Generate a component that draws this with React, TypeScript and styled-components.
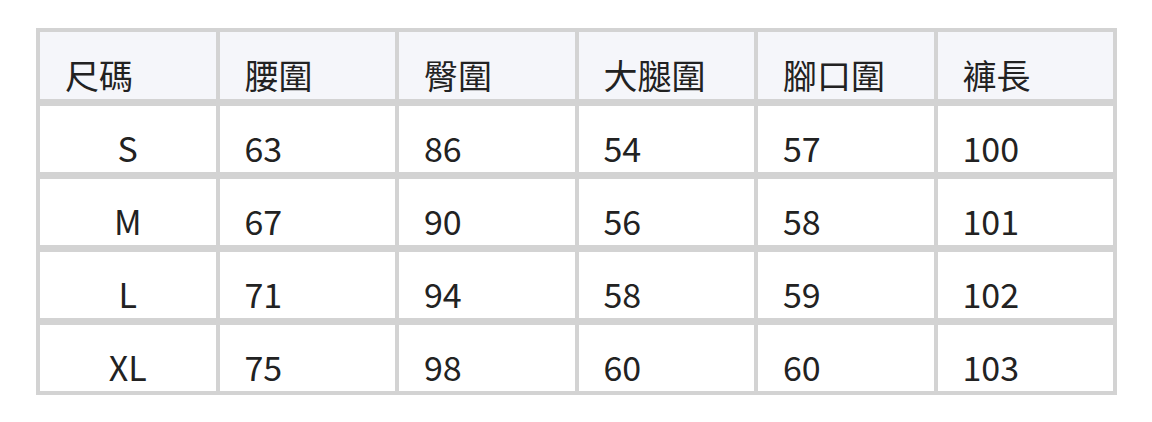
import React from 'react';
import styled, { createGlobalStyle } from 'styled-components';

const GlobalStyle = createGlobalStyle`
  body {
    margin: 0;
    background: #ffffff;
    font-family: 'Noto Sans CJK TC', 'Noto Sans', sans-serif;
  }
`;

const Page = styled.div`
  padding: 28px 36px;
`;

const SizeTable = styled.div`
  width: 1081px;
  box-sizing: border-box;
  padding: 4px;
  background: #d3d3d3;
  display: grid;
  grid-template-columns: repeat(6, 1fr);
  grid-template-rows: 67px repeat(4, 66px);
  column-gap: 4px;
  row-gap: 7px;
`;

const Cell = styled.div<{ $head?: boolean; $center?: boolean }>`
  display: flex;
  align-items: center;
  justify-content: ${(p) => (p.$center ? 'center' : 'flex-start')};
  box-sizing: border-box;
  padding: 18px 0 0 ${(p) => (p.$center ? '0' : '25px')};
  background: ${(p) => (p.$head ? '#f5f6fa' : '#ffffff')};
  color: #222222;
  font-size: 34px;
  line-height: 1;
`;

const headers = ['尺碼', '腰圍', '臀圍', '大腿圍', '腳口圍', '褲長'];

const rows = [
  ['S', '63', '86', '54', '57', '100'],
  ['M', '67', '90', '56', '58', '101'],
  ['L', '71', '94', '58', '59', '102'],
  ['XL', '75', '98', '60', '60', '103'],
];

export default function App() {
  return (
    <>
      <GlobalStyle />
      <Page>
        <SizeTable>
          {headers.map((h) => (
            <Cell key={h} $head>
              {h}
            </Cell>
          ))}
          {rows.map((row) =>
            row.map((v, i) => (
              <Cell key={row[0] + i} $center={i === 0}>
                {v}
              </Cell>
            ))
          )}
        </SizeTable>
      </Page>
    </>
  );
}
